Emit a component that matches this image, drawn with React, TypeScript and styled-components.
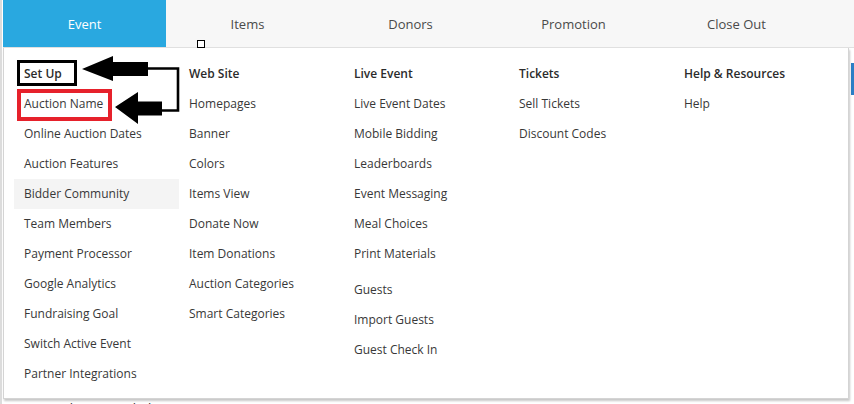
import React from 'react'
import styled, { createGlobalStyle } from 'styled-components'

const GlobalStyle = createGlobalStyle`
  html, body {
    margin: 0;
    padding: 0;
    background: #ffffff;
  }
  body {
    font-family: 'Open Sans', 'Liberation Sans', sans-serif;
    color: #333;
  }
`

type Entry = { label: string; header?: boolean; active?: boolean; gapBefore?: boolean }

const tabs = ['Event', 'Items', 'Donors', 'Promotion', 'Close Out']

const columns: Entry[][] = [
  [
    { label: 'Set Up', header: true },
    { label: 'Auction Name' },
    { label: 'Online Auction Dates' },
    { label: 'Auction Features' },
    { label: 'Bidder Community', active: true },
    { label: 'Team Members' },
    { label: 'Payment Processor' },
    { label: 'Google Analytics' },
    { label: 'Fundraising Goal' },
    { label: 'Switch Active Event' },
    { label: 'Partner Integrations' },
  ],
  [
    { label: 'Web Site', header: true },
    { label: 'Homepages' },
    { label: 'Banner' },
    { label: 'Colors' },
    { label: 'Items View' },
    { label: 'Donate Now' },
    { label: 'Item Donations' },
    { label: 'Auction Categories' },
    { label: 'Smart Categories' },
  ],
  [
    { label: 'Live Event', header: true },
    { label: 'Live Event Dates' },
    { label: 'Mobile Bidding' },
    { label: 'Leaderboards' },
    { label: 'Event Messaging' },
    { label: 'Meal Choices' },
    { label: 'Print Materials' },
    { label: 'Guests', gapBefore: true },
    { label: 'Import Guests' },
    { label: 'Guest Check In' },
  ],
  [
    { label: 'Tickets', header: true },
    { label: 'Sell Tickets' },
    { label: 'Discount Codes' },
  ],
  [
    { label: 'Help & Resources', header: true },
    { label: 'Help' },
  ],
]

export default function App() {
  return (
    <>
      <GlobalStyle />
      <Page>
        <NavBar>
          {tabs.map(t => (
            <Tab key={t} $active={t === 'Event'}>
              {t}
            </Tab>
          ))}
        </NavBar>

        <Behind>
          <BehindLink>Donor Shipping Labels</BehindLink>
          <RightAccent />
        </Behind>

        <Dropdown>
          {columns.map((col, i) => (
            <Column key={i}>
              {col.map(e => (
                <MenuItem
                  key={e.label}
                  $header={e.header}
                  $active={e.active}
                  $gap={e.gapBefore}
                >
                  {e.label}
                </MenuItem>
              ))}
            </Column>
          ))}
        </Dropdown>

        {/* annotation marks drawn over the screenshot */}
        <CursorSquare />
        <MarkBox $color="#000" $w={3} style={{ left: 15, top: 60, width: 60, height: 26 }} />
        <MarkBox $color="#e6212b" $w={4} style={{ left: 15, top: 89, width: 95, height: 32 }} />

        <Arrows viewBox="0 0 854 404" width={854} height={404}>
          <polygon points="80,69 111,56 111,62 146,62 146,76 111,76 111,81" fill="#000" />
          <polyline
            points="145,68.5 176,68.5 176,110.5 158,110.5"
            fill="none"
            stroke="#000"
            strokeWidth={2.6}
          />
          <polygon points="113,107 136,92 136,101.5 160,101.5 160,115.5 136,115.5 136,124" fill="#000" />
        </Arrows>
      </Page>
    </>
  )
}

const Page = styled.div`
  position: relative;
  width: 854px;
  height: 404px;
  overflow: hidden;
  box-sizing: border-box;
  border-left: 2px solid #dcdcdc;
  padding-left: 1px;
`

const NavBar = styled.div`
  display: flex;
  height: 47px;
  background: #f7f7f7;
  border-bottom: 1px solid #e0e0e0;
`

const Tab = styled.div<{ $active?: boolean }>`
  flex: 0 0 163px;
  display: flex;
  align-items: center;
  justify-content: center;
  font-size: 13px;
  color: ${p => (p.$active ? '#fff' : '#4a4a4a')};
  background: ${p => (p.$active ? '#29a8e0' : 'transparent')};
`

const Behind = styled.div`
  position: relative;
  height: 356px;
  padding: 351px 0 0 18px;
  box-sizing: border-box;
`

const BehindLink = styled.div`
  font-size: 13px;
  color: #333;
`

const RightAccent = styled.div`
  position: absolute;
  right: 0;
  top: 15px;
  width: 3px;
  height: 32px;
  background: #2a7fc6;
`

const Dropdown = styled.div`
  position: absolute;
  top: 48px;
  left: 1px;
  width: 846px;
  height: 351px;
  box-sizing: border-box;
  display: flex;
  padding: 11px 10px 9px;
  background: #fff;
  border: 1px solid #d4d4d4;
  border-top: none;
  box-shadow: 1px 2px 2px rgba(0, 0, 0, 0.22);
`

const Column = styled.div`
  flex: 0 0 165px;
  display: flex;
  flex-direction: column;
`

const MenuItem = styled.div<{ $header?: boolean; $active?: boolean; $gap?: boolean }>`
  height: 30px;
  line-height: 30px;
  padding: 0 10px;
  margin-top: ${p => (p.$gap ? '6px' : '0')};
  font-size: 12px;
  font-weight: ${p => (p.$header ? 600 : 400)};
  color: ${p => (p.$header ? '#2b2b2b' : '#383838')};
  background: ${p => (p.$active ? '#f4f4f4' : 'transparent')};
  white-space: nowrap;
`

const CursorSquare = styled.div`
  position: absolute;
  left: 195px;
  top: 40px;
  width: 6px;
  height: 6px;
  border: 1px solid #000;
  background: #fff;
`

const MarkBox = styled.div<{ $color: string; $w: number }>`
  position: absolute;
  box-sizing: border-box;
  border: ${p => `${p.$w}px solid ${p.$color}`};
`

const Arrows = styled.svg`
  position: absolute;
  left: 0;
  top: 0;
  pointer-events: none;
`
